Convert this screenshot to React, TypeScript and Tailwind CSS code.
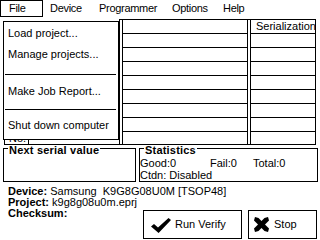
import React from "react";

const menuItems = [
  { label: "Device", cls: "w-[56px] pl-[7px]" },
  { label: "Programmer", cls: "w-[73px]" },
  { label: "Options", cls: "w-[51px]" },
  { label: "Help", cls: "w-[40px]" },
];

function MenuBar() {
  return (
    <div className="flex h-[17px] leading-[17px] tracking-[-0.3px]">
      <div className="w-[43px] h-[17px] border border-black pl-[8px] leading-[15px]">File</div>
      {menuItems.map((m) => (
        <div key={m.label} className={m.cls}>
          {m.label}
        </div>
      ))}
    </div>
  );
}

// one row of the job table; the 2px spacers make the double lines
function TableRow({ cells, last }: { cells: string[]; last?: boolean }) {
  const b = last ? "" : "border-b border-black";
  return (
    <div className={`flex ${last ? "h-[12px] leading-[12px]" : "h-[14px] leading-[13px]"}`}>
      <div className={`w-[24px] border-r border-black pl-[4px] ${b}`}>{cells[0]}</div>
      <div className={`w-[91px] border-r border-black ${b}`}>{cells[1]}</div>
      <div className="w-[2px]" />
      <div className={`w-[126px] border-l border-r border-black ${b}`}>{cells[2]}</div>
      <div className="w-[2px]" />
      <div className={`w-[65px] border-l border-black pl-[5px] ${b}`}>{cells[3]}</div>
    </div>
  );
}

function JobTable() {
  const rows = Array.from({ length: 7 }, () => ["", "", "", ""]);
  return (
    <div className="mt-[2px] ml-[4px] w-[312px] border border-black">
      <TableRow cells={["", "", "", "Serialization"]} />
      {rows.map((r, i) => (
        <TableRow key={i} cells={r} />
      ))}
      <TableRow cells={["No.", "", "", ""]} last />
    </div>
  );
}

function GroupBox({
  title,
  className,
  children,
}: {
  title: string;
  className: string;
  children?: React.ReactNode;
}) {
  return (
    <div className={`relative h-[34px] border border-black ${className}`}>
      <div className="absolute top-[-4px] left-[4px] bg-white px-[1px] font-bold leading-[11px] tracking-[0.2px]">
        {title}
      </div>
      {children}
    </div>
  );
}

function CheckIcon() {
  return (
    <svg width="20" height="15" viewBox="0 0 20 15" className="shrink-0">
      <path d="M0 8.5 L3 6 L7 9.6 L17.5 0 L20 2 L7.6 15 Z" fill="#000" />
    </svg>
  );
}

function CrossIcon() {
  return (
    <svg width="15" height="15" viewBox="0 0 15 15" className="shrink-0">
      <path d="M1 0 L4.5 1 L15 11.5 L14 15 L10.5 14 L0 3.5 Z" fill="#000" />
      <path d="M14 0 L15 3.5 L4.5 14 L1 15 L0 11.5 L10.5 1 Z" fill="#000" />
    </svg>
  );
}

function FileMenu() {
  const item = "h-[21px] leading-[21px] pl-[4px]";
  return (
    <div className="absolute left-0 top-[17px] w-[119px] h-[123px] bg-white pl-[3px] pt-[4px]">
      <div className="flex h-[119px] w-[116px] flex-col border border-black pt-[1px]">
        <div className={item}>Load project...</div>
        <div className={item}>Manage projects...</div>
        <div className="mt-[9px] ml-[1px] mr-[2px] h-[1px] bg-black" />
        <div className={`${item} mt-[6px]`}>Make Job Report...</div>
        <div className="mt-[7px] ml-[1px] mr-[2px] h-[1px] bg-black" />
        <div className={`${item} mt-[5px]`}>Shut down computer</div>
      </div>
    </div>
  );
}

export default function App() {
  return (
    <div className="relative h-[240px] w-[320px] overflow-hidden bg-white text-[11px] text-black font-['Liberation_Sans',Arial,sans-serif]">
      <MenuBar />
      <JobTable />

      <div className="mt-[3px] flex">
        <GroupBox title="Next serial value" className="ml-[3px] w-[133px]" />
        <GroupBox title="Statistics" className="ml-[3px] w-[179px]">
          <div className="flex flex-col pt-[9px] leading-[11px]">
            <div className="flex h-[11px]">
              <span className="w-[70px]">Good:0</span>
              <span className="w-[43px]">Fail:0</span>
              <span>Total:0</span>
            </div>
            <div className="mt-[1px] h-[11px]">Ctdn: Disabled</div>
          </div>
        </GroupBox>
      </div>

      <div className="mt-[4px] pl-[8px] leading-[11px]">
        <div className="h-[11px] whitespace-pre">
          <span className="font-bold">Device:</span> Samsung  K9G8G08U0M [TSOP48]
        </div>
        <div className="h-[11px] whitespace-pre">
          <span className="font-bold">Project:</span> k9g8g08u0m.eprj
        </div>
      </div>

      <div className="flex">
        <div className="h-[11px] w-[143px] pl-[8px] font-bold leading-[11px]">Checksum:</div>
        <div className="mt-[2px] flex">
          <button
            type="button"
            className="flex h-[29px] w-[99px] items-center gap-[4px] border border-black bg-white pl-[7px] leading-[11px]"
          >
            <span className="mt-[1px] flex">
              <CheckIcon />
            </span>
            Run Verify
          </button>
          <button
            type="button"
            className="ml-[6px] flex h-[29px] w-[69px] items-center gap-[5px] border border-black bg-white pl-[5px] leading-[11px]"
          >
            <CrossIcon />
            Stop
          </button>
        </div>
      </div>

      <FileMenu />
    </div>
  );
}
